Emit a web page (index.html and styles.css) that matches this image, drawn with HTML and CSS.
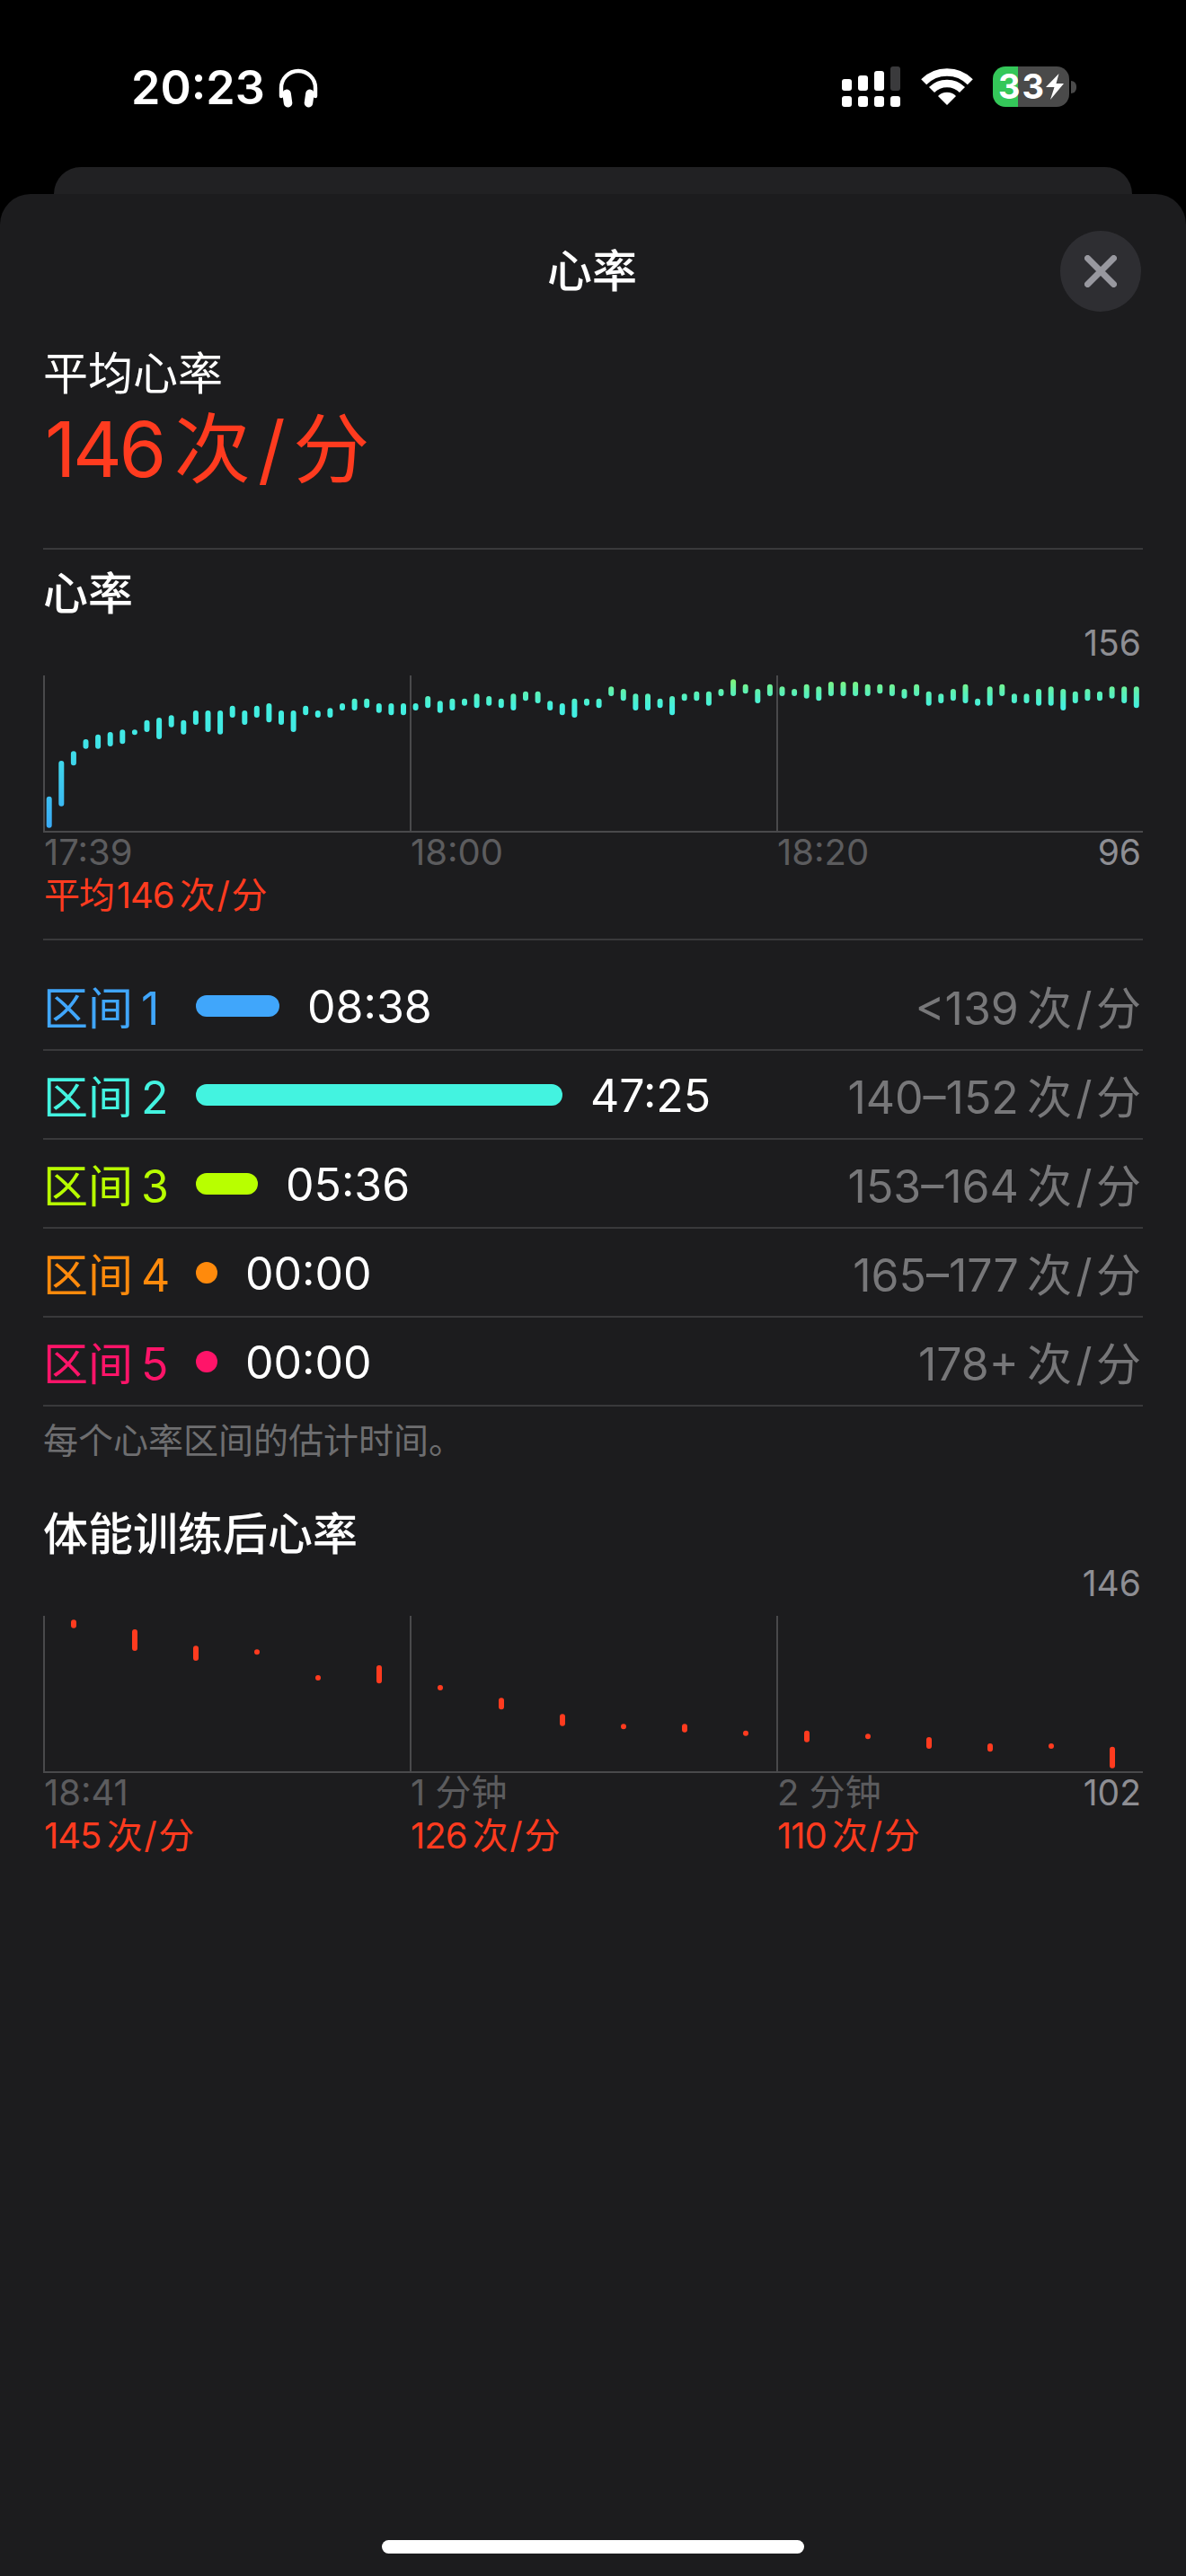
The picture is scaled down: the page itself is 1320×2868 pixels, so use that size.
FILE: index.html
```html
<!DOCTYPE html>
<html lang="zh-CN">
  <head>
    <meta charset="UTF-8" />
    <meta name="viewport" content="width=device-width, initial-scale=1.0" />
    <title>心率</title>
    <link rel="stylesheet" href="styles.css">
  </head>
  <body>
    <!-- Status bar -->
    <div class="status-bar">
      <div class="status-left">
        <span class="clock">20:23</span>
        <svg class="headphones" viewBox="0 0 44 44">
          <path d="M3 31V22a19 19 0 0 1 38 0v9" fill="none" stroke="#fff" stroke-width="4.4" stroke-linecap="round" />
          <rect x="5" y="23.500" width="9.500" height="20" rx="4.700" fill="#fff" transform="rotate(-8 10 33)" />
          <rect x="29.500" y="23.500" width="9.500" height="20" rx="4.700" fill="#fff" transform="rotate(8 34 33)" />
        </svg>
      </div>
      <div class="status-right">
        <div class="signal">
          <div class="signal-col"><i class="bar-top h1"></i><i class="bar-low"></i></div>
          <div class="signal-col"><i class="bar-top h2"></i><i class="bar-low"></i></div>
          <div class="signal-col"><i class="bar-top h3"></i><i class="bar-low"></i></div>
          <div class="signal-col"><i class="bar-top h4 off"></i><i class="bar-low"></i></div>
        </div>
        <svg class="wifi" viewBox="0 0 58 41">
          <path d="M3.200 15.200a36.500 36.500 0 0 1 51.600 0M12 24a24 24 0 0 1 34 0" fill="none" stroke="#fff" stroke-width="8.500" />
          <path d="M29 41 19 31a14 14 0 0 1 20 0z" fill="#fff" />
        </svg>
        <div class="battery">
          <div class="battery-body">
            <span class="battery-text">33</span>
            <svg class="bolt" viewBox="0 0 20 30">
              <path d="M14.500 0 0 15h9.500L5 29 20 11h-8.500z" fill="#fff" />
            </svg>
          </div>
          <div class="battery-nub"></div>
        </div>
      </div>
    </div>

    <div class="back-card"></div>

    <div class="sheet">
      <div class="sheet-header">
        <span></span>
        <h1 class="sheet-title">心率</h1>
        <button class="close-button" type="button">
          <svg viewBox="0 0 36 36">
            <path d="M3.500 3.500l29 29M32.500 3.500l-29 29" stroke="#98989f" stroke-width="7" stroke-linecap="round" />
          </svg>
        </button>
      </div>

      <div class="summary">
        <div class="summary-label">平均心率</div>
        <div class="summary-value">146&thinsp;次&thinsp;/&thinsp;分</div>
      </div>

      <!-- Heart rate chart -->
      <div class="section">
        <h2 class="section-title first">心率</h2>
        <div class="chart-max">156</div>
        <div class="chart">
          <div class="chart-cell"></div>
          <div class="chart-cell"></div>
          <div class="chart-cell"></div>
          <svg class="bars" id="rate-bars" viewBox="0 0 1224 174"></svg>
        </div>
        <div class="axis">
          <div class="axis-cell"><span class="tick">17:39</span><span class="note">平均&hairsp;146&thinsp;次&hairsp;/&hairsp;分</span></div>
          <div class="axis-cell"><span class="tick">18:00</span></div>
          <div class="axis-cell last"><span class="tick">18:20</span><span class="tick-end">96</span></div>
        </div>
      </div>

      <!-- Zones -->
      <div class="zones">
        <div class="zone">
          <span class="zone-name z1">区间&thinsp;1</span>
          <span class="zone-bar z1-bg" style="width: 93px"></span>
          <span class="zone-time">08:38</span>
          <span class="zone-range">&lt;139&thinsp;次&hairsp;/&hairsp;分</span>
        </div>
        <div class="zone">
          <span class="zone-name z2">区间&thinsp;2</span>
          <span class="zone-bar z2-bg" style="width: 408px"></span>
          <span class="zone-time">47:25</span>
          <span class="zone-range">140–152&thinsp;次&hairsp;/&hairsp;分</span>
        </div>
        <div class="zone">
          <span class="zone-name z3">区间&thinsp;3</span>
          <span class="zone-bar z3-bg" style="width: 69px"></span>
          <span class="zone-time">05:36</span>
          <span class="zone-range">153–164&thinsp;次&hairsp;/&hairsp;分</span>
        </div>
        <div class="zone">
          <span class="zone-name z4">区间&thinsp;4</span>
          <span class="zone-bar z4-bg" style="width: 24px"></span>
          <span class="zone-time">00:00</span>
          <span class="zone-range">165–177&thinsp;次&hairsp;/&hairsp;分</span>
        </div>
        <div class="zone">
          <span class="zone-name z5">区间&thinsp;5</span>
          <span class="zone-bar z5-bg" style="width: 24px"></span>
          <span class="zone-time">00:00</span>
          <span class="zone-range">178+&thinsp;次&hairsp;/&hairsp;分</span>
        </div>
      </div>
      <p class="zones-note">每个心率区间的估计时间。</p>

      <!-- Recovery chart -->
      <div class="section recovery">
        <h2 class="section-title">体能训练后心率</h2>
        <div class="chart-max">146</div>
        <div class="chart">
          <div class="chart-cell"></div>
          <div class="chart-cell"></div>
          <div class="chart-cell"></div>
          <svg class="bars" id="recovery-bars" viewBox="0 0 1224 174"></svg>
        </div>
        <div class="axis">
          <div class="axis-cell"><span class="tick">18:41</span><span class="note">145&thinsp;次&hairsp;/&hairsp;分</span></div>
          <div class="axis-cell"><span class="tick">1 分钟</span><span class="note">126&thinsp;次&hairsp;/&hairsp;分</span></div>
          <div class="axis-cell last"><span class="tick">2 分钟</span><span class="note">110&thinsp;次&hairsp;/&hairsp;分</span><span class="tick-end">102</span></div>
        </div>
      </div>

      <div class="home-bar"></div>
    </div>

    <script src="chart.js"></script>
  </body>
</html>
```

FILE: styles.css
```css
* {
  box-sizing: border-box;
}

body {
  margin: 0;
  height: 2868px;
  display: flex;
  flex-direction: column;
  background-color: #000;
  color: #fff;
  font-family: Inter, "Noto Sans CJK SC", sans-serif;
  overflow: hidden;
}

/* Status bar */
.status-bar {
  height: 186px;
  flex: none;
  display: flex;
  justify-content: space-between;
  padding: 74px 122px 0 146px;
}

.status-left {
  display: flex;
  align-items: flex-start;
  gap: 15px;
}

.clock {
  font-size: 52px;
  font-weight: 600;
  line-height: 48px;
}

.headphones {
  width: 44px;
  height: 44px;
  margin-top: 2px;
}

.status-right {
  display: flex;
  align-items: flex-start;
}

.signal {
  display: flex;
  gap: 7px;
}

.signal-col {
  width: 11px;
  height: 45px;
  display: flex;
  flex-direction: column;
  justify-content: flex-end;
  gap: 6px;
}

.signal-col i {
  display: block;
  border-radius: 3px;
  background-color: #fff;
}

.bar-low {
  height: 12px;
}

.h1 {
  height: 13px;
}

.h2 {
  height: 17px;
}

.h3 {
  height: 22px;
}

.h4 {
  height: 27px;
}

.signal-col .off {
  background-color: #3a3a3c;
}

.wifi {
  width: 58px;
  height: 41px;
  margin: 2px 0 0 23px;
}

.battery {
  display: flex;
  align-items: center;
  margin-left: 22px;
}

.battery-body {
  width: 85px;
  height: 45px;
  display: flex;
  align-items: center;
  padding-left: 6px;
  border-radius: 14px;
  background: linear-gradient(to right, #34c759 28px, #4a4a4a 28px);
}

.battery-text {
  font-size: 38px;
  font-weight: 700;
  line-height: 45px;
  letter-spacing: 2px;
}

.bolt {
  width: 20px;
  height: 30px;
}

.battery-nub {
  width: 6px;
  height: 14px;
  margin-left: 2px;
  border-radius: 0 6px 6px 0;
  background-color: #4a4a4a;
}

.back-card {
  height: 30px;
  flex: none;
  margin: 0 60px;
  border-radius: 32px 32px 0 0;
  background-color: #212123;
}

/* Sheet */
.sheet {
  flex: 1;
  display: flex;
  flex-direction: column;
  padding: 41px 48px 0;
  border-radius: 34px 34px 0 0;
  background-color: #1c1c1e;
}

.sheet-header {
  display: grid;
  grid-template-columns: 1fr auto 1fr;
  align-items: center;
  height: 90px;
  margin-right: 2px;
}

.sheet-title {
  margin: 0;
  font-size: 50px;
  font-weight: 500;
  line-height: 60px;
}

.close-button {
  justify-self: end;
  width: 90px;
  height: 90px;
  display: flex;
  align-items: center;
  justify-content: center;
  padding: 0;
  border: none;
  border-radius: 50%;
  background-color: #2e2e32;
}

.close-button svg {
  width: 36px;
  height: 36px;
}

.summary {
  margin-top: 39px;
  padding-bottom: 59px;
  border-bottom: 2px solid #39393b;
}

.summary-label {
  font-size: 50px;
  line-height: 60px;
}

.summary-value {
  margin-top: 5px;
  padding-left: 2px;
  color: #ff3b1f;
  font-size: 85px;
  line-height: 100px;
  letter-spacing: -3.500px;
}

/* Charts */
.section-title {
  margin: 0;
  font-size: 50px;
  font-weight: 500;
  line-height: 60px;
}

.section-title.first {
  margin-top: 19px;
}

.chart-max {
  margin-top: 2px;
  padding-right: 2px;
  color: #8e8e93;
  font-size: 39px;
  line-height: 46px;
  text-align: right;
}

.chart {
  position: relative;
  height: 175px;
  margin-top: 13px;
  display: grid;
  grid-template-columns: repeat(3, 1fr);
  border-bottom: 2px solid #49494b;
}

.chart-cell {
  border-left: 2px solid #49494b;
}

/* sits over the grid lines */
.bars {
  position: absolute;
  top: 0;
  left: 0;
  width: 1224px;
  height: 174px;
}

.axis {
  display: grid;
  grid-template-columns: repeat(3, 1fr);
  height: 96px;
}

.axis-cell {
  display: flex;
  flex-direction: column;
  align-items: flex-start;
  padding-left: 1px;
}

.axis-cell.last {
  position: relative;
}

.tick {
  color: #5c5c5e;
  font-size: 40px;
  line-height: 44px;
}

.tick-end {
  position: absolute;
  top: 0;
  right: 2px;
  color: #8e8e93;
  font-size: 39px;
  line-height: 44px;
}

.note {
  color: #ff3b1f;
  font-size: 40px;
  line-height: 52px;
  letter-spacing: -1px;
}

/* Zones */
.zones {
  margin-top: 22px;
  padding-top: 24px;
  border-top: 2px solid #39393b;
}

.zone {
  display: flex;
  align-items: center;
  height: 99px;
  border-bottom: 2px solid #39393b;
}

.zone-name {
  width: 170px;
  margin-bottom: 2px;
  font-size: 50px;
  white-space: nowrap;
}

.zone-bar {
  height: 24px;
  border-radius: 12px;
}

.zone-time {
  margin: 2px 0 0 31px;
  font-size: 50px;
}

.zone-range {
  margin: 0 0 2px auto;
  padding-right: 2px;
  color: #777779;
  font-size: 50px;
}

.z1 {
  color: #40a6fb;
}

.z2 {
  color: #43f3e0;
}

.z3 {
  color: #b8ff00;
}

.z4 {
  color: #ff8a0c;
}

.z5 {
  color: #ff1469;
}

.z1-bg {
  background-color: #40a6fb;
}

.z2-bg {
  background-color: #43f3e0;
}

.z3-bg {
  background-color: #b8ff00;
}

.z4-bg {
  background-color: #ff8a0c;
}

.z5-bg {
  background-color: #ff1469;
}

.zones-note {
  margin: 15px 0 0;
  color: #6e6e70;
  font-size: 39px;
  line-height: 46px;
}

.recovery {
  margin-top: 51px;
}

.home-bar {
  width: 470px;
  height: 15px;
  margin: auto auto 25px;
  border-radius: 8px;
  background-color: #fff;
}
```

FILE: chart.js
```js
// bar tops and bottoms, in thirds of a pixel from the top of the chart
const rateBars = [
  [404, 509], [285, 437], [253, 301], [213, 245], [197, 245], [189, 237], [181, 229], [181, 197], [149, 189],
  [141, 213], [133, 173], [149, 197], [117, 165], [117, 189], [117, 197], [101, 141], [117, 165], [101, 141],
  [93, 157], [117, 165], [117, 189], [101, 133], [117, 141], [109, 141], [93, 117], [77, 117], [77, 109],
  [93, 125], [93, 133], [93, 133], [93, 117], [69, 109], [85, 125], [77, 117], [77, 101], [61, 109],
  [69, 101], [77, 109], [61, 117], [53, 85], [53, 93], [85, 117], [93, 133], [77, 141], [77, 101],
  [77, 109], [37, 69], [45, 85], [61, 117], [61, 117], [77, 109], [69, 133], [61, 85], [53, 85],
  [53, 101], [45, 69], [13, 69], [29, 61], [45, 93], [29, 69], [37, 69], [45, 69], [29, 77],
  [37, 85], [21, 69], [21, 69], [21, 69], [29, 69], [29, 61], [29, 69], [45, 77], [29, 69],
  [53, 101], [61, 93], [45, 85], [29, 93], [77, 101], [37, 101], [29, 69], [61, 93], [61, 93],
  [45, 101], [37, 101], [45, 117], [53, 93], [45, 85], [53, 85], [37, 77], [37, 93], [37, 109],
];

const recoveryBars = [
  [13, 41], [45, 117], [100, 150], [112, 128], [198, 215], [165, 226], [231, 247], [274, 313], [328, 368],
  [361, 378], [361, 389], [383, 400], [383, 422], [394, 411], [405, 444], [426, 454], [426, 443], [437, 509],
];

const SVG_NS = "http://www.w3.org/2000/svg";
const BAR_WIDTH = 6;

function drawBars(svg, bars, firstX, step, paint) {
  let d = "";
  bars.forEach(function (bar, i) {
    const x = (firstX + i * step).toFixed(1);
    const top = bar[0] / 3 + BAR_WIDTH / 2;
    const bottom = Math.max(bar[1] / 3 - BAR_WIDTH / 2, top + 0.01);
    d += `M${x} ${top.toFixed(1)}V${bottom.toFixed(1)}`;
  });

  const path = document.createElementNS(SVG_NS, "path");
  path.setAttribute("d", d);
  path.setAttribute("fill", "none");
  path.setAttribute("stroke", paint);
  path.setAttribute("stroke-width", BAR_WIDTH);
  path.setAttribute("stroke-linecap", "round");
  svg.appendChild(path);
}

// colour follows the height in the chart, zone by zone
function addZoneGradient(svg) {
  const gradient = document.createElementNS(SVG_NS, "linearGradient");
  gradient.setAttribute("id", "zone-gradient");
  gradient.setAttribute("gradientUnits", "userSpaceOnUse");
  gradient.setAttribute("x1", 0);
  gradient.setAttribute("y1", 0);
  gradient.setAttribute("x2", 0);
  gradient.setAttribute("y2", 174);
  [[0, "#8df765"], [0.11, "#5cf0b5"], [0.2, "#43f0e0"], [0.4, "#40e6e6"], [1, "#3aa8f8"]].forEach(function (stop) {
    const el = document.createElementNS(SVG_NS, "stop");
    el.setAttribute("offset", stop[0]);
    el.setAttribute("stop-color", stop[1]);
    gradient.appendChild(el);
  });
  svg.appendChild(gradient);
}

const rateSvg = document.querySelector("#rate-bars");
addZoneGradient(rateSvg);
drawBars(rateSvg, rateBars, 6.7, 13.597, "url(#zone-gradient)");
drawBars(document.querySelector("#recovery-bars"), recoveryBars, 34, 68, "#ff3b1f");
```
